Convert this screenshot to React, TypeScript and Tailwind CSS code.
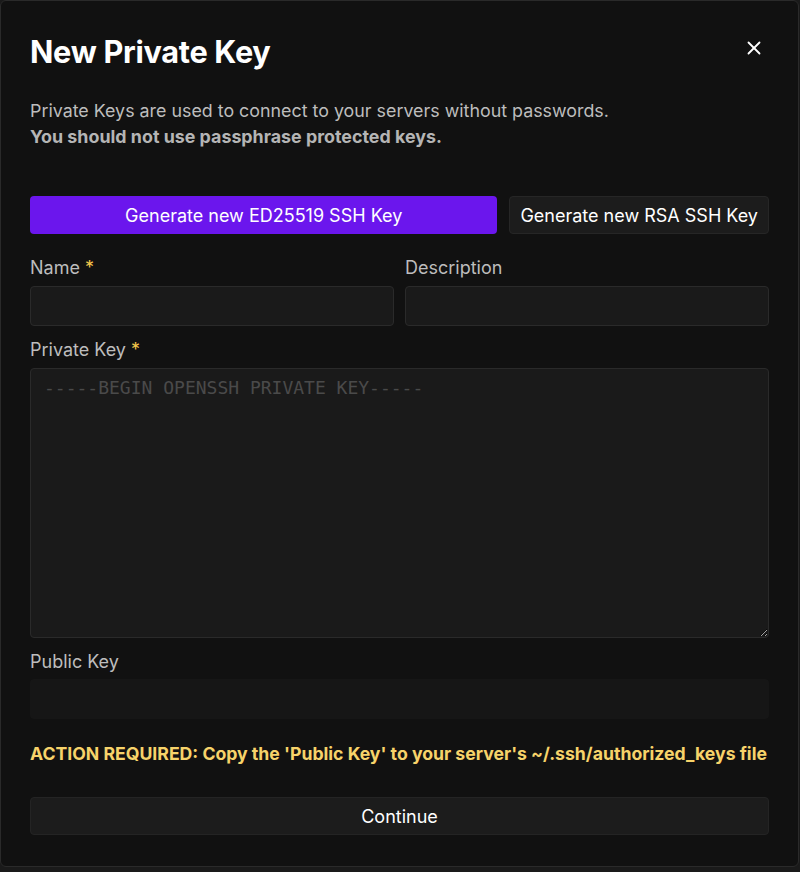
import { X } from 'lucide-react';

export default function App() {
    return (
        <div className="min-h-screen bg-[#1a1a1a] font-['Inter',sans-serif]">
            <div className="w-[799px] h-[867px] bg-[#111111] border border-[#2a2a2a] rounded-md px-[29px] flex flex-col">
                {/* Header */}
                <div className="flex items-start justify-between pt-[31px]">
                    <h1 className="text-[30.7px] leading-[40px] font-bold text-white tracking-[-0.3px]">New Private Key</h1>
                    <button className="mt-[5px] mr-[4px] text-white">
                        <X size={22} strokeWidth={2} />
                    </button>
                </div>

                <div className="mt-[26px] text-[17.85px] leading-[26px] text-[#bdbdbd]">
                    <p>Private Keys are used to connect to your servers without passwords.</p>
                    <p className="font-bold text-[#b5b5b5]">You should not use passphrase protected keys.</p>
                </div>

                {/* Generate buttons */}
                <div className="mt-[46px] flex gap-[12px]">
                    <button className="flex-1 h-[38px] rounded-[4px] bg-[#6b16ed] text-[18px] text-white">
                        Generate new ED25519 SSH Key
                    </button>
                    <button className="h-[38px] px-[10px] rounded-[4px] bg-[#1c1c1c] border border-[#262626] text-[18px] text-white">
                        Generate new RSA SSH Key
                    </button>
                </div>

                {/* Name / Description */}
                <div className="mt-[22px] grid grid-cols-2 gap-[11px]">
                    <div className="flex flex-col">
                        <label className="text-[18px] leading-[24px] text-[#bdbdbd]">
                            Name <span className="text-[#f5c84c]">*</span>
                        </label>
                        <input className="mt-[6px] h-[40px] rounded-[4px] bg-[#1a1a1a] border border-[#2a2a2a] outline-none" />
                    </div>
                    <div className="flex flex-col">
                        <label className="text-[18px] leading-[24px] text-[#bdbdbd]">Description</label>
                        <input className="mt-[6px] h-[40px] rounded-[4px] bg-[#1a1a1a] border border-[#2a2a2a] outline-none" />
                    </div>
                </div>

                {/* Private key */}
                <label className="mt-[12px] text-[18px] leading-[24px] text-[#bdbdbd]">
                    Private Key <span className="text-[#f5c84c]">*</span>
                </label>
                <textarea
                    className="mt-[6px] h-[270px] rounded-[4px] bg-[#1a1a1a] border border-[#2a2a2a] outline-none px-[13px] py-[7px] font-['DejaVu_Sans_Mono',monospace] text-[18px] leading-[24px] text-white placeholder:text-[#4a4a4a] [color-scheme:dark]"
                    placeholder="-----BEGIN OPENSSH PRIVATE KEY-----"
                />

                {/* Public key */}
                <label className="mt-[12px] text-[18px] leading-[24px] text-[#bdbdbd]">Public Key</label>
                <input className="mt-[5px] h-[40px] rounded-[4px] bg-[#161616] outline-none" readOnly />

                <p className="mt-[23px] text-[17.65px] leading-[24px] font-bold text-[#f7d36a] whitespace-nowrap">
                    ACTION REQUIRED: Copy the 'Public Key' to your server's ~/.ssh/authorized_keys file
                </p>

                <button className="mt-[31px] h-[38px] rounded-[4px] bg-[#1c1c1c] border border-[#242424] text-[18px] text-white">
                    Continue
                </button>
            </div>
        </div>
    );
}
